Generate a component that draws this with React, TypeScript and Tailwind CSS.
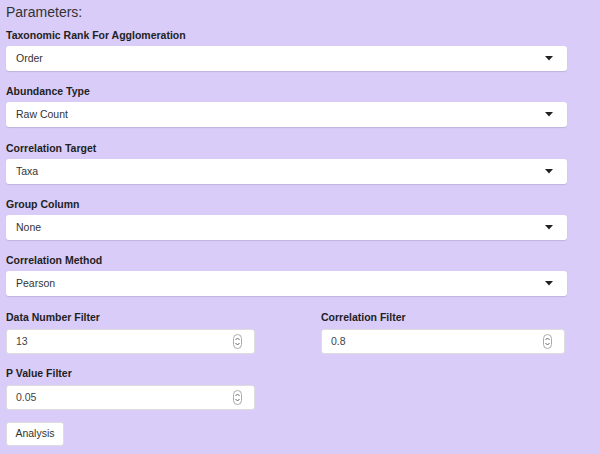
import React from "react";

function Caret() {
  return (
    <svg width="8" height="5" viewBox="0 0 8 5" className="shrink-0 mr-[1px]">
      <path d="M0 0 H8 L4 4.5 Z" fill="#222" />
    </svg>
  );
}

function Spinner() {
  return (
    <svg width="9" height="15" viewBox="0 0 9 15" className="shrink-0">
      <rect x="0.5" y="0.5" width="8" height="14" rx="4" fill="#fff" stroke="#aaa" />
      <path d="M2.5 6 L4.5 4 L6.5 6" fill="none" stroke="#666" strokeWidth="1" />
      <path d="M2.5 9 L4.5 11 L6.5 9" fill="none" stroke="#666" strokeWidth="1" />
    </svg>
  );
}

function SelectBox({ label, value, extra }: { label: string; value: string; extra?: string }) {
  return (
    <div className={`flex flex-col ${extra ?? ""}`}>
      <div className="h-[14px] text-[10.5px] leading-[14px] font-bold text-[#222]">{label}</div>
      <div className="mt-[4px] h-[25px] w-[561px] bg-white rounded-[3px] shadow-[0_1px_1px_rgba(0,0,0,0.12)] flex items-center justify-between pl-[10px] pr-[13px]">
        <span className="text-[10.5px] text-[#333]">{value}</span>
        <Caret />
      </div>
    </div>
  );
}

function NumBox({ label, value, width }: { label: string; value: string; width: string }) {
  return (
    <div className="flex flex-col">
      <div className="h-[14px] text-[10.5px] leading-[14px] font-bold text-[#222]">{label}</div>
      <div
        className={`mt-[5px] h-[25px] ${width} bg-white rounded-[3px] border border-[#ddd] flex items-center justify-between pl-[9px] pr-[12px]`}
      >
        <span className="text-[10.5px] text-[#444]">{value}</span>
        <Spinner />
      </div>
    </div>
  );
}

export default function App() {
  return (
    <div
      className="w-[600px] h-[454px] bg-[#d9ccf9] pl-[6px] pt-[3px] overflow-hidden"
      style={{ fontFamily: '"Liberation Sans", Arial, sans-serif' }}
    >
      <div className="h-[18px] text-[14px] leading-[18px] text-[#333]">Parameters:</div>
      <div className="mt-[7px] flex flex-col">
        <SelectBox label="Taxonomic Rank For Agglomeration" value="Order" />
        <SelectBox label="Abundance Type" value="Raw Count" extra="mt-[13px]" />
        <SelectBox label="Correlation Target" value="Taxa" extra="mt-[14px]" />
        <SelectBox label="Group Column" value="None" extra="mt-[13px]" />
        <SelectBox label="Correlation Method" value="Pearson" extra="mt-[13px]" />
      </div>
      <div className="mt-[14px] flex">
        <div className="w-[315px]">
          <NumBox label="Data Number Filter" value="13" width="w-[249px]" />
        </div>
        <NumBox label="Correlation Filter" value="0.8" width="w-[244px]" />
      </div>
      <div className="mt-[12px]">
        <NumBox label="P Value Filter" value="0.05" width="w-[249px]" />
      </div>
      <button className="mt-[12px] h-[24px] w-[58px] bg-white rounded-[3px] border border-[#ddd] text-[10.5px] text-[#333] flex items-center justify-center">
        Analysis
      </button>
    </div>
  );
}
